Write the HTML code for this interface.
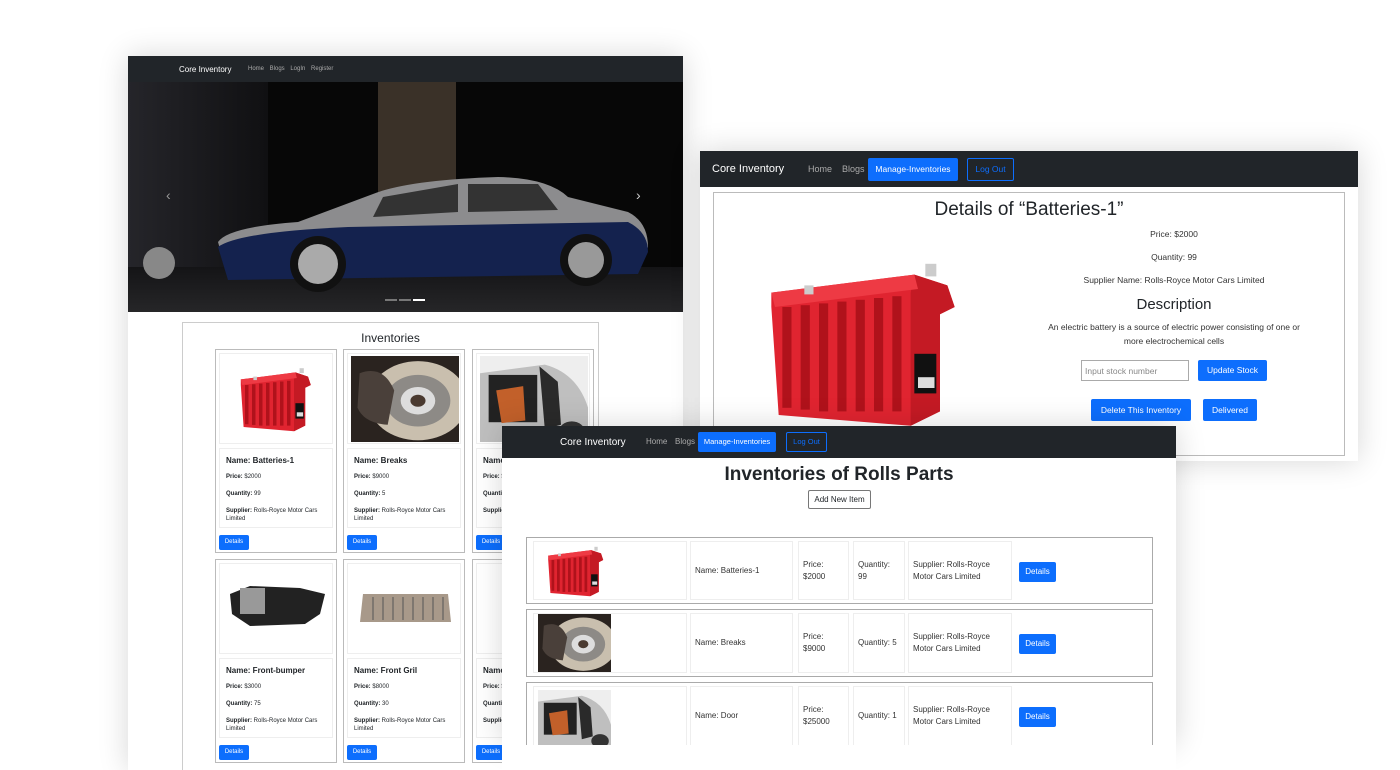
<!DOCTYPE html>
<html><head><meta charset="utf-8"><style>
*{margin:0;padding:0;box-sizing:border-box}
html,body{width:1400px;height:770px;overflow:hidden}
body{background:#fff;position:relative;font-family:"Liberation Sans",sans-serif;color:#212529}
.abs{position:absolute}
.panel{position:absolute;background:#fff;box-shadow:0 0 28px rgba(0,0,0,.16)}
.nav{position:absolute;left:0;right:0;top:0;background:#212529;color:#fff}
.btn{position:absolute;background:#0d6efd;color:#fff;border-radius:2px;text-align:center}
.card{position:absolute;border:1px solid #bbb;background:#fff}
.card .img{position:absolute;left:3px;right:3px;top:3px;height:91px;border:1px solid #eee;overflow:hidden}
.card .body{position:absolute;left:3px;right:3px;top:98px;height:80px;border:1px solid #eee;padding:4px 6px;font-size:6px;line-height:1.3}
.card .body b.t{font-size:8px;display:block;margin:3px 0 8px}
.card .body p{margin-bottom:9px}
.card .d{left:3px;bottom:2px;width:30px;height:15px;font-size:6px;line-height:15px}
.row{position:absolute;left:526px;width:627px;border:1px solid #aaa;background:#fff}
.cell{position:absolute;top:3px;bottom:3px;border:1px solid #eee;font-size:8px;line-height:12px;color:#333;display:flex;align-items:center;padding-left:4px}
</style></head><body>
<svg width="0" height="0" style="position:absolute">
<defs>
<symbol id="bat" viewBox="0 0 120 100">
<path d="M4 22 L82 12 L100 18 L104 30 L96 34 L96 88 L80 96 L8 90 L4 30 Z" fill="#e02430"/>
<path d="M82 12 L100 18 L104 30 L96 34 L96 88 L80 96 L80 22 Z" fill="#c41a24"/>
<path d="M4 22 L82 12 L84 20 L6 30Z" fill="#ee3a44"/>
<g fill="#b0121b"><rect x="10" y="30" width="5" height="56"/><rect x="20" y="29" width="5" height="58"/><rect x="30" y="28" width="5" height="60"/><rect x="40" y="27" width="5" height="61"/><rect x="50" y="26" width="5" height="62"/><rect x="60" y="25" width="5" height="63"/><rect x="70" y="24" width="5" height="64"/></g>
<rect x="82" y="56" width="12" height="22" fill="#111"/><rect x="84" y="69" width="9" height="6" fill="#ddd"/>
<rect x="88" y="6" width="6" height="7" fill="#ccc"/><rect x="22" y="18" width="5" height="5" fill="#ccc"/>
</symbol>
<symbol id="brake" viewBox="0 0 100 100">
<rect width="100" height="100" fill="#2a231f"/>
<circle cx="62" cy="52" r="46" fill="#c9bfae"/><circle cx="62" cy="52" r="30" fill="#8d8a86"/><circle cx="62" cy="52" r="16" fill="#ddd"/><circle cx="62" cy="52" r="7" fill="#4a3a30"/>
<path d="M8 20 Q30 10 40 40 L34 80 Q12 78 6 60Z" fill="#4a403a"/>
</symbol>
<symbol id="door" viewBox="0 0 100 100">
<rect width="100" height="100" fill="#eee"/>
<path d="M0 20 L60 10 Q90 20 100 60 L100 100 L0 100Z" fill="#bfbfbf"/>
<rect x="8" y="22" width="45" height="55" fill="#222"/>
<path d="M15 40 L40 35 L42 75 L20 78Z" fill="#c2602a"/>
<path d="M55 12 L72 30 L75 80 L60 85Z" fill="#2a2a2a"/>
<circle cx="85" cy="88" r="12" fill="#333"/>
</symbol>
</defs></svg>

<!-- Panel 1 -->
<div class="panel" style="left:128px;top:56px;width:555px;height:714px">
 <div class="nav" style="height:26px">
  <span class="abs" style="left:51px;top:9px;font-size:8px">Core Inventory</span>
  <span class="abs" style="left:120px;top:10px;font-size:6px;color:#aaa;word-spacing:4px">Home Blogs LogIn Register</span>
 </div>
 <div class="abs" style="left:0;top:26px;width:555px;height:230px;background:#070707;overflow:hidden">
  <div class="abs" style="left:0;top:0;width:140px;height:230px;background:linear-gradient(90deg,#25252a,#101012)"></div>
  <div class="abs" style="left:250px;top:0;width:78px;height:120px;background:#3a3128"></div>
  <div class="abs" style="left:0;top:185px;width:555px;height:45px;background:linear-gradient(#141416,#262628)"></div>
  <div class="abs" style="left:15px;top:165px;width:32px;height:32px;border-radius:50%;background:#888"></div>
  <svg class="abs" style="left:80px;top:90px" width="450" height="120" viewBox="0 0 450 120">
   <path d="M10 70 Q20 55 90 50 L165 22 Q200 8 290 5 Q340 6 360 25 L420 40 Q440 50 440 75 L430 100 L20 105 Z" fill="#8c8c8e"/>
   <path d="M10 75 Q30 60 140 55 L420 50 Q440 60 440 80 L430 102 L20 108 Z" fill="#14224e"/>
   <path d="M175 25 L250 12 L250 40 L165 45Z M260 12 L330 12 L350 38 L260 40Z" fill="#333"/>
   <circle cx="110" cy="92" r="28" fill="#111"/><circle cx="110" cy="92" r="20" fill="#aaa"/>
   <circle cx="378" cy="88" r="26" fill="#111"/><circle cx="378" cy="88" r="18" fill="#999"/>
  </svg>
  <span class="abs" style="left:38px;top:105px;color:#999;font-size:14px">‹</span>
  <span class="abs" style="left:508px;top:105px;color:#ccc;font-size:14px">›</span>
  <div class="abs" style="left:257px;top:217px;width:12px;height:2px;background:#777"></div>
  <div class="abs" style="left:271px;top:217px;width:12px;height:2px;background:#777"></div>
  <div class="abs" style="left:285px;top:217px;width:12px;height:2px;background:#fff"></div>
 </div>
 <div class="abs" style="left:54px;top:266px;width:417px;height:460px;border:1px solid #ccc">
  <div class="abs" style="left:0;right:0;top:8px;text-align:center;font-size:12px">Inventories</div>
 </div>
</div>
<!-- cards -->
<div class="card" style="left:215px;top:349px;width:122px;height:204px"><div class="img"><svg width="114" height="89" viewBox="0 0 114 89"><use href="#bat" x="18" y="10" width="84" height="70"/></svg></div><div class="body"><b class="t">Name: Batteries-1</b><p><b>Price:</b> $2000</p><p><b>Quantity:</b> 99</p><p><b>Supplier:</b> Rolls-Royce Motor Cars Limited</p></div><div class="btn d">Details</div></div>
<div class="card" style="left:343px;top:349px;width:122px;height:204px"><div class="img"><svg width="108" height="86" style="margin:2px 3px" preserveAspectRatio="none" viewBox="0 0 100 100"><use href="#brake"/></svg></div><div class="body"><b class="t">Name: Breaks</b><p><b>Price:</b> $9000</p><p><b>Quantity:</b> 5</p><p><b>Supplier:</b> Rolls-Royce Motor Cars Limited</p></div><div class="btn d">Details</div></div>
<div class="card" style="left:472px;top:349px;width:122px;height:204px"><div class="img"><svg width="108" height="86" style="margin:2px 3px" preserveAspectRatio="none" viewBox="0 0 100 100"><use href="#door"/></svg></div><div class="body"><b class="t">Name: Door</b><p><b>Price:</b> $25000</p><p><b>Quantity:</b> 1</p><p><b>Supplier:</b> Rolls</p></div><div class="btn d">Details</div></div>
<div class="card" style="left:215px;top:559px;width:122px;height:204px"><div class="img"><svg width="114" height="89" viewBox="0 0 114 89"><path d="M10 30 L30 22 L80 24 L105 30 L100 50 L85 60 L30 62 L12 50Z" fill="#222"/><rect x="20" y="24" width="25" height="26" fill="#999"/></svg></div><div class="body"><b class="t">Name: Front-bumper</b><p><b>Price:</b> $3000</p><p><b>Quantity:</b> 75</p><p><b>Supplier:</b> Rolls-Royce Motor Cars Limited</p></div><div class="btn d">Details</div></div>
<div class="card" style="left:343px;top:559px;width:122px;height:204px"><div class="img"><svg width="114" height="89" viewBox="0 0 114 89"><path d="M15 30 L100 30 L103 58 L12 58Z" fill="#a8998a"/><g stroke="#555" stroke-width="1"><path d="M25 33V56M35 33V56M45 33V56M55 33V56M65 33V56M75 33V56M85 33V56M95 33V56"/></g></svg></div><div class="body"><b class="t">Name: Front Gril</b><p><b>Price:</b> $8000</p><p><b>Quantity:</b> 30</p><p><b>Supplier:</b> Rolls-Royce Motor Cars Limited</p></div><div class="btn d">Details</div></div>
<div class="card" style="left:472px;top:559px;width:122px;height:204px"><div class="img"></div><div class="body"><b class="t">Name</b><p><b>Price:</b> $</p><p><b>Quantity</b></p><p><b>Supplier</b></p></div><div class="btn d">Details</div></div>

<!-- Panel 2 -->
<div class="panel" style="left:700px;top:151px;width:658px;height:310px">
 <div class="nav" style="height:36px">
  <span class="abs" style="left:12px;top:12px;font-size:11px">Core Inventory</span>
  <span class="abs" style="left:108px;top:13px;font-size:9px;color:#aaa">Home</span>
  <span class="abs" style="left:142px;top:13px;font-size:9px;color:#aaa">Blogs</span>
  <div class="btn" style="left:168px;top:7px;width:90px;height:23px;font-size:8.5px;line-height:23px">Manage-Inventories</div>
  <div class="abs" style="left:267px;top:7px;width:47px;height:23px;border:1px solid #0d6efd;border-radius:2px;color:#0d6efd;font-size:8.5px;line-height:21px;text-align:center">Log Out</div>
 </div>
 <div class="abs" style="left:13px;top:41px;width:632px;height:264px;border:1px solid #bbb">
  <div class="abs" style="left:0;right:0;top:6px;text-align:center;font-size:19px">Details of “Batteries-1”</div>
  <svg class="abs" style="left:50px;top:60px" width="220" height="180" viewBox="0 0 120 100" preserveAspectRatio="none"><use href="#bat"/></svg>
  <div class="abs" style="left:330px;width:260px;top:36px;text-align:center;font-size:8.5px;line-height:11px;color:#333">Price: $2000</div>
  <div class="abs" style="left:330px;width:260px;top:59px;text-align:center;font-size:8.5px;color:#333">Quantity: 99</div>
  <div class="abs" style="left:330px;width:260px;top:82px;text-align:center;font-size:8.5px;color:#333">Supplier Name: Rolls-Royce Motor Cars Limited</div>
  <div class="abs" style="left:330px;width:260px;top:103px;text-align:center;font-size:15px">Description</div>
  <div class="abs" style="left:325px;width:270px;top:127px;text-align:center;font-size:8.5px;line-height:14px;color:#333">An electric battery is a source of electric power consisting of one or more electrochemical cells</div>
  <div class="abs" style="left:367px;top:167px;width:108px;height:21px;border:1px solid #aaa;font-size:8.5px;color:#888;padding:5px 3px">Input stock number</div>
  <div class="btn" style="left:484px;top:167px;width:69px;height:21px;font-size:8.5px;line-height:21px">Update Stock</div>
  <div class="btn" style="left:377px;top:206px;width:100px;height:22px;font-size:8.5px;line-height:22px">Delete This Inventory</div>
  <div class="btn" style="left:489px;top:206px;width:54px;height:22px;font-size:8.5px;line-height:22px">Delivered</div>
 </div>
</div>

<!-- Panel 3 -->
<div class="panel" style="left:502px;top:426px;width:674px;height:319px">
 <div class="nav" style="height:32px">
  <span class="abs" style="left:58px;top:11px;font-size:10px">Core Inventory</span>
  <span class="abs" style="left:144px;top:11px;font-size:8px;color:#aaa">Home</span>
  <span class="abs" style="left:173px;top:11px;font-size:8px;color:#aaa">Blogs</span>
  <div class="btn" style="left:196px;top:6px;width:78px;height:20px;font-size:7.5px;line-height:20px">Manage-Inventories</div>
  <div class="abs" style="left:284px;top:6px;width:41px;height:20px;border:1px solid #0d6efd;border-radius:2px;color:#0d6efd;font-size:7.5px;line-height:18px;text-align:center">Log Out</div>
 </div>
</div>
<div class="abs" style="left:502px;top:464px;width:674px;text-align:center;font-size:19px;font-weight:bold">Inventories of Rolls Parts</div>
<div class="abs" style="left:808px;top:490px;width:63px;height:19px;border:1px solid #777;border-radius:2px;font-size:8px;line-height:17px;text-align:center">Add New Item</div>

<div class="row" style="top:537px;height:67px">
 <div class="cell" style="left:6px;width:154px"><svg width="66" height="56" viewBox="0 0 120 100" style="margin-left:8px"><use href="#bat"/></svg></div>
 <div class="cell" style="left:163px;width:103px">Name: Batteries-1</div>
 <div class="cell" style="left:271px;width:51px">Price:<br>$2000</div>
 <div class="cell" style="left:326px;width:52px">Quantity:<br>99</div>
 <div class="cell" style="left:381px;width:104px">Supplier: Rolls-Royce Motor Cars Limited</div>
 <div class="btn" style="left:492px;top:24px;width:37px;height:20px;font-size:8px;line-height:20px">Details</div>
</div>
<div class="row" style="top:609px;height:68px">
 <div class="cell" style="left:6px;width:154px;padding-left:4px"><svg width="73" height="58" preserveAspectRatio="none" viewBox="0 0 100 100"><use href="#brake"/></svg></div>
 <div class="cell" style="left:163px;width:103px">Name: Breaks</div>
 <div class="cell" style="left:271px;width:51px">Price:<br>$9000</div>
 <div class="cell" style="left:326px;width:52px">Quantity: 5</div>
 <div class="cell" style="left:381px;width:104px">Supplier: Rolls-Royce Motor Cars Limited</div>
 <div class="btn" style="left:492px;top:24px;width:37px;height:20px;font-size:8px;line-height:20px">Details</div>
</div>
<div class="row" style="top:682px;height:68px">
 <div class="cell" style="left:6px;width:154px;padding-left:4px;align-items:flex-start;padding-top:3px"><svg width="73" height="58" preserveAspectRatio="none" viewBox="0 0 100 100"><use href="#door"/></svg></div>
 <div class="cell" style="left:163px;width:103px">Name: Door</div>
 <div class="cell" style="left:271px;width:51px">Price:<br>$25000</div>
 <div class="cell" style="left:326px;width:52px">Quantity: 1</div>
 <div class="cell" style="left:381px;width:104px">Supplier: Rolls-Royce Motor Cars Limited</div>
 <div class="btn" style="left:492px;top:24px;width:37px;height:20px;font-size:8px;line-height:20px">Details</div>
</div>
<div class="abs" style="left:502px;top:745px;width:674px;height:25px;background:#fff"></div>
</body></html>
